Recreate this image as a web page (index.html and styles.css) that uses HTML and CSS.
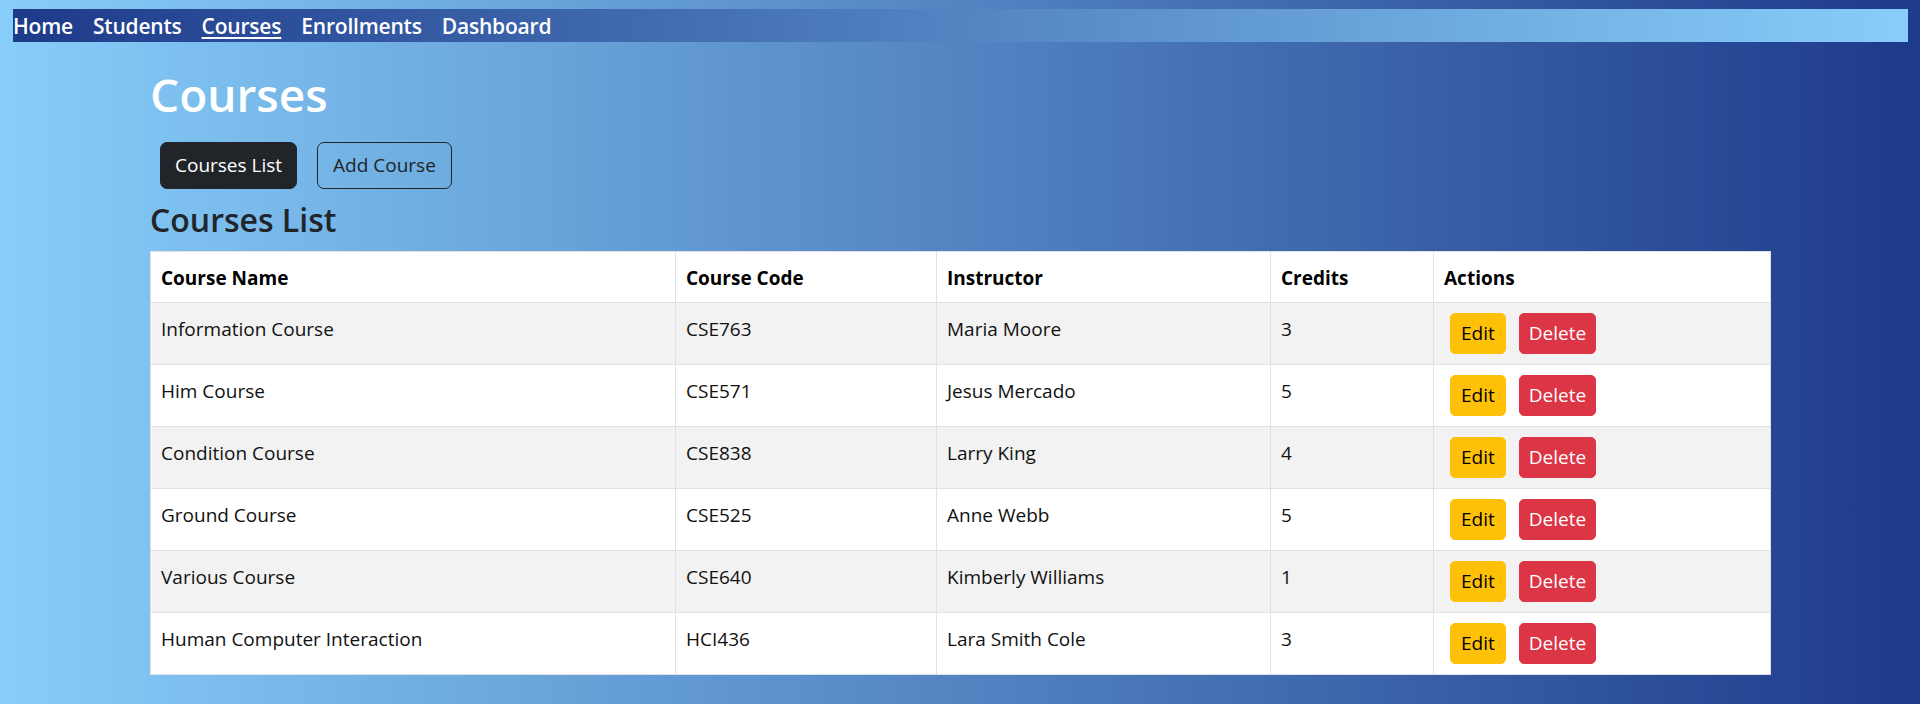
FILE: index.html
```html
<!DOCTYPE html>
<html lang="en">
<head>
<meta charset="utf-8">
<title>Courses</title>
<link rel="stylesheet" href="styles.css">
</head>
<body>
<nav class="topnav">
  <a href="#" class="nav-link">Home</a>
  <a href="#" class="nav-link">Students</a>
  <a href="#" class="nav-link active">Courses</a>
  <a href="#" class="nav-link">Enrollments</a>
  <a href="#" class="nav-link">Dashboard</a>
</nav>
<main class="container">
  <h1 class="page-title">Courses</h1>
  <div class="tabs">
    <button class="btn btn-dark">Courses List</button>
    <button class="btn btn-outline">Add Course</button>
  </div>
  <h2 class="section-title">Courses List</h2>
  <table class="courses">
    <colgroup>
      <col class="col-name">
      <col class="col-code">
      <col class="col-instructor">
      <col class="col-credits">
      <col class="col-actions">
    </colgroup>
    <thead>
      <tr><th>Course Name</th><th>Course Code</th><th>Instructor</th><th>Credits</th><th>Actions</th></tr>
    </thead>
    <tbody>
      <tr><td>Information Course</td><td>CSE763</td><td>Maria Moore</td><td>3</td><td><div class="actions"><button class="sbtn sbtn-edit">Edit</button><button class="sbtn sbtn-delete">Delete</button></div></td></tr>
      <tr><td>Him Course</td><td>CSE571</td><td>Jesus Mercado</td><td>5</td><td><div class="actions"><button class="sbtn sbtn-edit">Edit</button><button class="sbtn sbtn-delete">Delete</button></div></td></tr>
      <tr><td>Condition Course</td><td>CSE838</td><td>Larry King</td><td>4</td><td><div class="actions"><button class="sbtn sbtn-edit">Edit</button><button class="sbtn sbtn-delete">Delete</button></div></td></tr>
      <tr><td>Ground Course</td><td>CSE525</td><td>Anne Webb</td><td>5</td><td><div class="actions"><button class="sbtn sbtn-edit">Edit</button><button class="sbtn sbtn-delete">Delete</button></div></td></tr>
      <tr><td>Various Course</td><td>CSE640</td><td>Kimberly Williams</td><td>1</td><td><div class="actions"><button class="sbtn sbtn-edit">Edit</button><button class="sbtn sbtn-delete">Delete</button></div></td></tr>
      <tr><td>Human Computer Interaction</td><td>HCI436</td><td>Lara Smith Cole</td><td>3</td><td><div class="actions"><button class="sbtn sbtn-edit">Edit</button><button class="sbtn sbtn-delete">Delete</button></div></td></tr>
    </tbody>
  </table>
</main>
</body>
</html>
```

FILE: styles.css
```css
html, body {
  margin: 0;
  padding: 0;
}
body {
  min-height: 704px;
  font-family: "Open Sans", "Noto Sans", sans-serif;
  font-size: 19px;
  color: #212529;
  background: linear-gradient(to right, #87cefa, #1e3a8a);
  padding-top: 9px;
  padding-bottom: 20px;
  box-sizing: border-box;
}

.topnav {
  margin: 0 12px 0 13px;
  height: 33px;
  display: flex;
  align-items: center;
  gap: 20px;
  background: linear-gradient(to right, #1e3a8a, #87cefa);
}
.nav-link {
  color: #fff;
  font-size: 21px;
  font-weight: 600;
  line-height: 33px;
  padding-top: 1px;
  text-decoration: none;
  letter-spacing: -0.2px;
}
.nav-link.active {
  text-decoration: underline;
  text-decoration-thickness: 2px;
  text-underline-offset: 3px;
}

.container {
  width: 1620px;
  margin: 0 auto;
}

.page-title {
  margin: 22px 0 18px 0;
  font-size: 46px;
  line-height: 60px;
  font-weight: 600;
  color: #fff;
}

.tabs {
  display: flex;
  height: 47px;
}
.btn {
  box-sizing: border-box;
  height: 47px;
  margin: 0 10px;
  padding: 0 14px;
  font-family: inherit;
  font-size: 19px;
  line-height: 45px;
  border-radius: 7px;
  border: 1px solid #212529;
  cursor: pointer;
}
.btn-dark {
  background: #212529;
  color: #fff;
}
.btn-outline {
  background: transparent;
  color: #212529;
  padding: 0 15px;
}

.section-title {
  margin: 10px 0 10px 0;
  font-size: 32px;
  line-height: 42px;
  font-weight: 600;
  color: #212529;
}

.courses {
  width: 1620px;
  table-layout: fixed;
  border-collapse: collapse;
  background: #fff;
  border: 1px solid #dee2e6;
  color: #111;
}
.col-name { width: 525px; }
.col-code { width: 261px; }
.col-instructor { width: 334px; }
.col-credits { width: 163px; }
.col-actions { width: 337px; }

.courses th,
.courses td {
  border: 1px solid #dee2e6;
  padding: 11px 10px 9px 10px;
  line-height: 30px;
  text-align: left;
  vertical-align: top;
  font-size: 19px;
}
.courses td:last-child {
  padding-top: 10px;
  padding-bottom: 10px;
}
.courses th {
  font-weight: 700;
  color: #000;
}
.courses tbody tr:nth-child(odd) td {
  background: #f2f2f2;
}

.actions {
  display: flex;
  gap: 13px;
  padding-left: 6px;
}
.sbtn {
  box-sizing: border-box;
  height: 41px;
  padding: 0 10px;
  font-family: inherit;
  font-size: 19px;
  line-height: 39px;
  border-radius: 5px;
  border: 1px solid transparent;
  cursor: pointer;
}
.sbtn-edit {
  background: #ffc107;
  border-color: #ffc107;
  color: #000;
}
.sbtn-delete {
  background: #dc3545;
  border-color: #dc3545;
  color: #fff;
  padding: 0 9px;
}
```
